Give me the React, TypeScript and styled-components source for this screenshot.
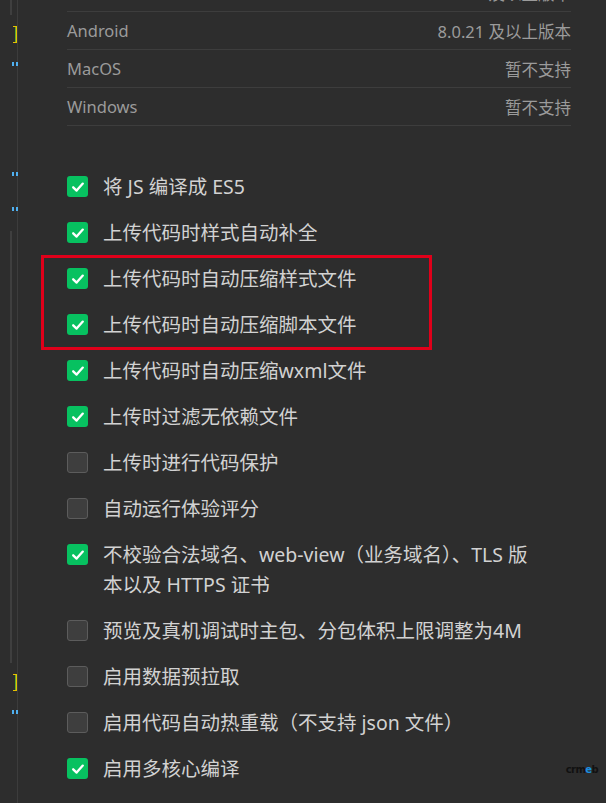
import React from "react";
import styled, { createGlobalStyle } from "styled-components";

const Global = createGlobalStyle`
  html, body { margin: 0; padding: 0; background: #2d2d2d; }
  body { font-family: "Noto Sans", "Noto Sans CJK SC", sans-serif; }
`;

const Page = styled.div`
  display: grid;
  grid-template-columns: 18px 1fr;
  min-height: 803px;
  height: 803px;
  overflow: hidden;
  background: #2d2d2d;
`;

const Gutter = styled.div`
  position: relative;
  border-right: 1px solid #3c3c3c;
`;

const Track = styled.div<{ $top: number; $height: number }>`
  position: absolute;
  left: 10px;
  width: 2px;
  top: ${(p) => p.$top}px;
  height: ${(p) => p.$height}px;
  background: #3f3f3f;
`;

const Bracket = styled.div<{ $top: number }>`
  position: absolute;
  left: 13px;
  top: ${(p) => p.$top}px;
  width: 3px;
  height: 15px;
  border: 1px solid #e6c000;
  border-left: none;
  box-shadow: inset -1px 0 0 #5fae2d;
`;

const Quote = styled.div<{ $top: number }>`
  position: absolute;
  left: 12px;
  top: ${(p) => p.$top}px;
  width: 6px;
  height: 4px;
  background: linear-gradient(90deg, #4fb0f0 0 2px, transparent 2px 4px, #4fb0f0 4px 6px);
`;

const Content = styled.div`
  padding: 0 35px 0 49px;
`;

const Table = styled.div`
  margin-top: -26px;
  display: flex;
  flex-direction: column;
`;

const InfoRow = styled.div`
  display: flex;
  justify-content: space-between;
  align-items: center;
  height: 37px;
  border-bottom: 1px solid #3d3d3d;
  font-size: 16.5px;
  color: #9b9b9b;
`;

const List = styled.div`
  display: flex;
  flex-direction: column;
  padding-top: 38px;
`;

const Row = styled.div`
  display: flex;
  align-items: flex-start;
  gap: 15px;
  padding: 8px 0;
  line-height: 30px;
  font-size: 19.5px;
  color: #d2d2d2;
`;

const Box = styled.span<{ $on: boolean }>`
  flex: none;
  width: 21px;
  height: 21px;
  margin-top: 4px;
  border-radius: 3px;
  box-sizing: border-box;
  display: flex;
  align-items: center;
  justify-content: center;
  background: ${(p) => (p.$on ? "#07c160" : "#3e3e3e")};
  border: ${(p) => (p.$on ? "none" : "1px solid #5c5c5c")};
`;

const Highlight = styled.div`
  position: relative;
  &::after {
    content: "";
    position: absolute;
    left: -26px;
    width: 385px;
    top: -1px;
    bottom: -2px;
    border: 3px solid #e0001a;
    pointer-events: none;
  }
`;

const Footer = styled.div`
  position: relative;
`;

const Mark = styled.span`
  position: absolute;
  right: -27px;
  top: 18px;
  font-family: "DejaVu Sans", sans-serif;
  font-weight: bold;
  font-size: 10px;
  letter-spacing: -0.6px;
  color: #111;
  b { color: #1a8fe0; }
`;

const Check = () => (
  <svg width="14" height="14" viewBox="0 0 14 14">
    <path d="M2.2 7.3 L5.6 10.6 L11.8 3.6" fill="none" stroke="#fff" strokeWidth="2.3" strokeLinecap="round" strokeLinejoin="round" />
  </svg>
);

const Item = ({ on, children }: { on: boolean; children: React.ReactNode }) => (
  <Row>
    <Box $on={on}>{on && <Check />}</Box>
    <span>{children}</span>
  </Row>
);

export default function App() {
  return (
    <>
      <Global />
      <Page>
        <Gutter>
          <Track $top={0} $height={15} />
          <Track $top={231} $height={432} />
          <Bracket $top={26} />
          <Quote $top={62} />
          <Quote $top={172} />
          <Quote $top={207} />
          <Bracket $top={674} />
          <Quote $top={710} />
        </Gutter>
        <Content>
          <Table>
            <InfoRow>
              <span>iOS</span>
              <span>8.0.21 及以上版本</span>
            </InfoRow>
            <InfoRow>
              <span>Android</span>
              <span>8.0.21 及以上版本</span>
            </InfoRow>
            <InfoRow>
              <span>MacOS</span>
              <span>暂不支持</span>
            </InfoRow>
            <InfoRow>
              <span>Windows</span>
              <span>暂不支持</span>
            </InfoRow>
          </Table>
          <List>
            <Item on>将 JS 编译成 ES5</Item>
            <Item on>上传代码时样式自动补全</Item>
            <Highlight>
              <Item on>上传代码时自动压缩样式文件</Item>
              <Item on>上传代码时自动压缩脚本文件</Item>
            </Highlight>
            <Item on>上传代码时自动压缩wxml文件</Item>
            <Item on>上传时过滤无依赖文件</Item>
            <Item on={false}>上传时进行代码保护</Item>
            <Item on={false}>自动运行体验评分</Item>
            <Item on>
              不校验合法域名、web-view（业务域名）、TLS 版
              <br />
              本以及 HTTPS 证书
            </Item>
            <Item on={false}>预览及真机调试时主包、分包体积上限调整为4M</Item>
            <Item on={false}>启用数据预拉取</Item>
            <Item on={false}>启用代码自动热重载（不支持 json 文件）</Item>
            <Footer>
              <Item on>启用多核心编译</Item>
              <Mark>
                crm<b>e</b>b
              </Mark>
            </Footer>
          </List>
        </Content>
      </Page>
    </>
  );
}
